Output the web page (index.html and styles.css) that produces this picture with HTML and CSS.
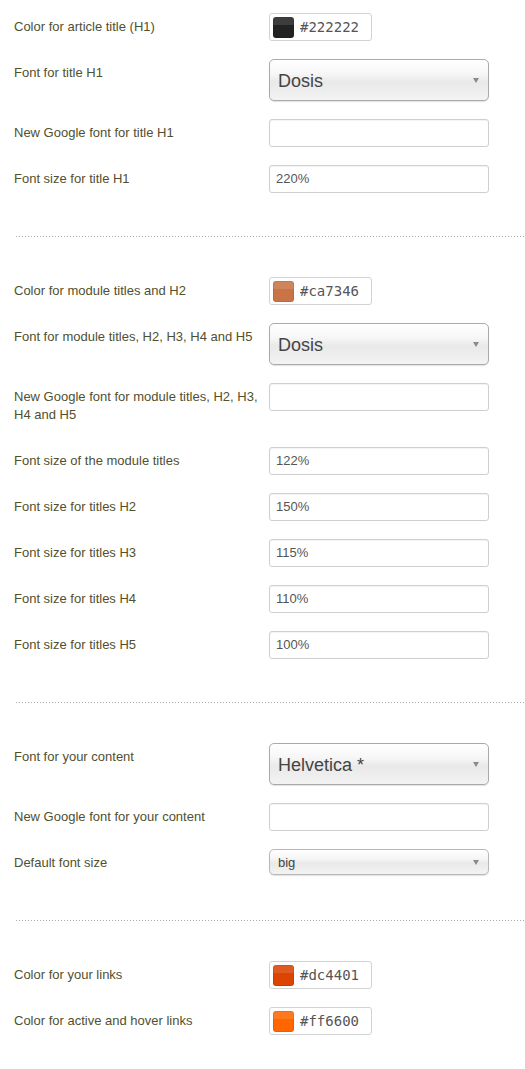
FILE: index.html
```html
<!DOCTYPE html>
<html>
<head>
<meta charset="utf-8">
<link rel="stylesheet" href="styles.css">
</head>
<body>
<div class="page">
  <div class="section">
    <div class="row">
      <div class="label">Color for article title (H1)</div>
      <div class="color"><span class="swatch" style="background-color:#222222"></span><span class="hex">#222222</span></div>
    </div>
    <div class="row">
      <div class="label">Font for title H1</div>
      <div class="select big"><span>Dosis</span><i class="arrow"></i></div>
    </div>
    <div class="row">
      <div class="label">New Google font for title H1</div>
      <div class="input"></div>
    </div>
    <div class="row">
      <div class="label">Font size for title H1</div>
      <div class="input">220%</div>
    </div>
  </div>
  <div class="sep"></div>
  <div class="section">
    <div class="row">
      <div class="label">Color for module titles and H2</div>
      <div class="color"><span class="swatch" style="background-color:#ca7346"></span><span class="hex">#ca7346</span></div>
    </div>
    <div class="row">
      <div class="label">Font for module titles, H2, H3, H4 and H5</div>
      <div class="select big"><span>Dosis</span><i class="arrow"></i></div>
    </div>
    <div class="row">
      <div class="label">New Google font for module titles, H2, H3, H4 and H5</div>
      <div class="input"></div>
    </div>
    <div class="row">
      <div class="label">Font size of the module titles</div>
      <div class="input">122%</div>
    </div>
    <div class="row">
      <div class="label">Font size for titles H2</div>
      <div class="input">150%</div>
    </div>
    <div class="row">
      <div class="label">Font size for titles H3</div>
      <div class="input">115%</div>
    </div>
    <div class="row">
      <div class="label">Font size for titles H4</div>
      <div class="input">110%</div>
    </div>
    <div class="row">
      <div class="label">Font size for titles H5</div>
      <div class="input">100%</div>
    </div>
  </div>
  <div class="sep"></div>
  <div class="section">
    <div class="row">
      <div class="label">Font for your content</div>
      <div class="select big"><span>Helvetica *</span><i class="arrow"></i></div>
    </div>
    <div class="row">
      <div class="label">New Google font for your content</div>
      <div class="input"></div>
    </div>
    <div class="row">
      <div class="label">Default font size</div>
      <div class="select small"><span>big</span><i class="arrow"></i></div>
    </div>
  </div>
  <div class="sep"></div>
  <div class="section">
    <div class="row">
      <div class="label">Color for your links</div>
      <div class="color"><span class="swatch" style="background-color:#dc4401"></span><span class="hex">#dc4401</span></div>
    </div>
    <div class="row">
      <div class="label">Color for active and hover links</div>
      <div class="color"><span class="swatch" style="background-color:#ff6600"></span><span class="hex">#ff6600</span></div>
    </div>
  </div>
</div>
</body>
</html>
```

FILE: styles.css
```css
html, body {
  margin: 0;
  padding: 0;
  background: #ffffff;
}
body {
  font-family: "Liberation Sans", Arial, sans-serif;
  font-size: 13px;
  color: #50502f;
}
.page {
  padding: 13px 0 0 14px;
  height: 1056px;
  overflow: hidden;
}
.section {
  display: flex;
  flex-direction: column;
  gap: 18px;
}
.row {
  display: grid;
  grid-template-columns: 255px 220px;
  align-items: start;
}
.label {
  padding: 5px 6px 5px 0;
  line-height: 18px;
}
.input {
  box-sizing: border-box;
  height: 28px;
  border: 1px solid #cfcfcf;
  border-radius: 3px;
  box-shadow: inset 0 1px 1px rgba(0,0,0,0.05);
  padding: 0 6px;
  line-height: 26px;
  color: #555;
  background: #fff;
}
.color {
  box-sizing: border-box;
  width: 103px;
  height: 28px;
  border: 1px solid #d2d2d2;
  border-radius: 3px;
  display: flex;
  align-items: center;
  padding-left: 3px;
  gap: 6px;
  background: #fff;
}
.swatch {
  display: block;
  width: 21px;
  height: 21px;
  border-radius: 3px;
  background-image: linear-gradient(to bottom, rgba(255,255,255,0.12) 0, rgba(255,255,255,0.12) 38%, rgba(0,0,0,0) 38%);
  box-shadow: inset 0 0 0 1px rgba(0,0,0,0.08);
}
.hex {
  font-family: "DejaVu Sans Mono", "Liberation Mono", monospace;
  font-size: 14px;
  color: #555;
}
.select {
  box-sizing: border-box;
  position: relative;
  border: 1px solid #aaaaaa;
  border-radius: 5px;
  background: linear-gradient(to bottom, #ffffff 0%, #f6f6f6 35%, #e9e9e9 55%, #f3f3f3 100%);
  box-shadow: 0 1px 1px rgba(0,0,0,0.12);
  color: #444;
  display: flex;
  align-items: center;
  padding-left: 8px;
}
.select.big {
  height: 42px;
  font-size: 18px;
  padding-top: 2px;
}
.select.small {
  height: 26px;
  font-size: 13px;
  border-color: #b8b8b8;
}
.arrow {
  position: absolute;
  right: 9px;
  top: 50%;
  margin-top: -2px;
  width: 0;
  height: 0;
  border-left: 3.5px solid transparent;
  border-right: 3.5px solid transparent;
  border-top: 5px solid #8a8a8a;
}
.sep {
  margin: 43px 0 40px 2px;
  height: 1px;
  background-image: linear-gradient(to right, #a9a9a9 1px, transparent 1px);
  background-size: 3px 1px;
  background-repeat: repeat-x;
}
```
